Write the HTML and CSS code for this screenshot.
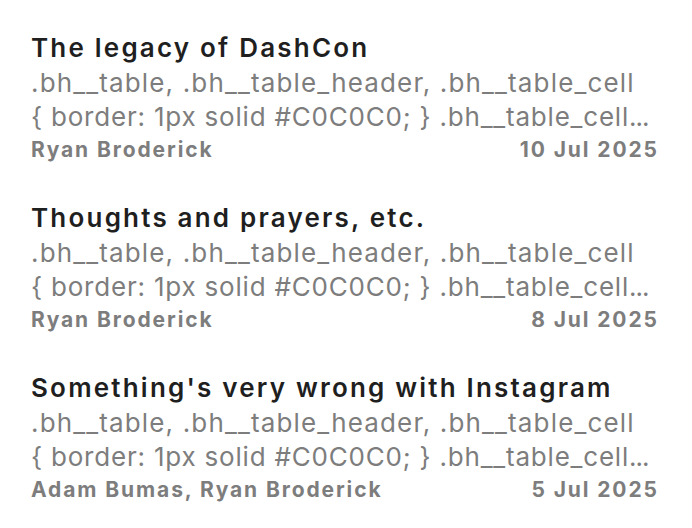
FILE: index.html
```html
<!DOCTYPE html>
<html>
<head>
<meta charset="utf-8">
<title>Posts</title>
<link rel="stylesheet" href="styles.css">
</head>
<body>
<div class="postList">

<div class="post">
<div class="postTitle">The legacy of DashCon</div>
<div class="postSnippet">.bh__table, .bh__table_header, .bh__table_cell</div>
<div class="postSnippet tight">{ border: 1px solid #C0C0C0; } .bh__table_cell<span class="more">...</span></div>
<div class="postMeta"><span>Ryan Broderick</span><span>10 Jul 2025</span></div>
</div>

<div class="post">
<div class="postTitle">Thoughts and prayers, etc.</div>
<div class="postSnippet">.bh__table, .bh__table_header, .bh__table_cell</div>
<div class="postSnippet tight">{ border: 1px solid #C0C0C0; } .bh__table_cell<span class="more">...</span></div>
<div class="postMeta"><span>Ryan Broderick</span><span>8 Jul 2025</span></div>
</div>

<div class="post">
<div class="postTitle">Something's very wrong with Instagram</div>
<div class="postSnippet">.bh__table, .bh__table_header, .bh__table_cell</div>
<div class="postSnippet tight">{ border: 1px solid #C0C0C0; } .bh__table_cell<span class="more">...</span></div>
<div class="postMeta"><span>Adam Bumas, Ryan Broderick</span><span>5 Jul 2025</span></div>
</div>

</div>
</body>
</html>
```

FILE: styles.css
```css
body {margin:0; background-color:#FFFFFF; font-family:Inter, "Noto Sans", sans-serif;}

.postList {display:flex; flex-direction:column; gap:34px; padding:30px 35px 0 31px;}

.post {display:flex; flex-direction:column;}
.postTitle {font-size:26px; line-height:36px; font-weight:600; letter-spacing:2.2px; color:#1F1F1F; white-space:nowrap;}
.postSnippet {font-size:26px; line-height:34px; letter-spacing:1.15px; color:#7D7D7D; white-space:nowrap;}
.postSnippet.tight {letter-spacing:0.8px;}
.postSnippet .more {letter-spacing:-1px;}
.postMeta {display:flex; justify-content:space-between; font-size:21px; line-height:32px; font-weight:700; letter-spacing:1.9px; color:#7D7D7D;}
.postMeta span:last-child {margin-right:-1.9px;}
```
